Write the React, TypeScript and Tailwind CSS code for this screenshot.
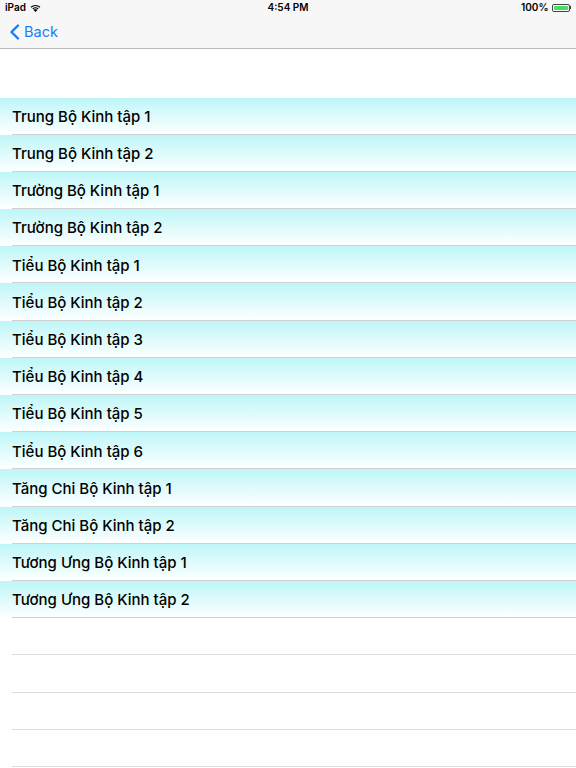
import React from "react";

const items = [
  "Trung Bộ Kinh tập 1",
  "Trung Bộ Kinh tập 2",
  "Trường Bộ Kinh tập 1",
  "Trường Bộ Kinh tập 2",
  "Tiểu Bộ Kinh tập 1",
  "Tiểu Bộ Kinh tập 2",
  "Tiểu Bộ Kinh tập 3",
  "Tiểu Bộ Kinh tập 4",
  "Tiểu Bộ Kinh tập 5",
  "Tiểu Bộ Kinh tập 6",
  "Tăng Chi Bộ Kinh tập 1",
  "Tăng Chi Bộ Kinh tập 2",
  "Tương Ưng Bộ Kinh tập 1",
  "Tương Ưng Bộ Kinh tập 2",
];

export default function App() {
  return (
    <div
      className="w-[576px] h-[768px] overflow-hidden bg-white"
      style={{ fontFamily: "Inter, 'Noto Sans', sans-serif" }}
    >
      <div className="bg-[#f7f7f7] border-b border-[#b8b8b8]">
        <div className="h-[15px] flex items-center justify-between px-[5px] text-[10px] font-semibold text-black relative">
          <div className="flex items-center gap-[4px]">
            <span>iPad</span>
            <svg width="11" height="8" viewBox="0 0 11 8">
              <path d="M5.5 8 L3.6 5.9 A2.8 2.8 0 0 1 7.4 5.9 Z" fill="#000" />
              <path d="M2.4 4.6 A4.6 4.6 0 0 1 8.6 4.6 L7.9 5.4 A3.5 3.5 0 0 0 3.1 5.4 Z" fill="#000" />
              <path d="M0.6 2.8 A7.2 7.2 0 0 1 10.4 2.8 L9.6 3.7 A6 6 0 0 0 1.4 3.7 Z" fill="#000" />
            </svg>
          </div>
          <span className="absolute left-1/2 -translate-x-1/2">4:54 PM</span>
          <div className="flex items-center gap-[3px]">
            <span>100%</span>
            <div className="flex items-center">
              <div className="w-[18px] h-[8px] border border-[#444] rounded-[2px] p-[1px]">
                <div className="w-full h-full bg-[#4cd964] rounded-[1px]" />
              </div>
              <div className="w-[1.5px] h-[3px] bg-[#444]" />
            </div>
          </div>
        </div>
        <div className="h-[33px] flex items-center pl-[9px] pt-[1px] text-[#157efb]">
          <svg width="11" height="16" viewBox="0 0 11 16" className="mr-[4px]">
            <path d="M9 1.5 L2.5 8 L9 14.5" stroke="#157efb" strokeWidth="2.4" fill="none" strokeLinecap="round" strokeLinejoin="round" />
          </svg>
          <span className="text-[14.5px]">Back</span>
        </div>
      </div>
      <div className="h-[48.5px]" />
      <div>
        {items.map((t) => (
          <div
            key={t}
            className="h-[37.2px] relative flex items-center pl-[12px] pt-[2px] bg-gradient-to-b from-[#bdf6f8] to-white"
          >
            <span className="text-[15px] font-medium text-black">{t}</span>
            <div className="absolute left-[12px] right-0 bottom-0 h-px bg-[#d2d2d2]" />
          </div>
        ))}
        {[0, 1, 2, 3].map((i) => (
          <div key={i} className="h-[37.2px] relative">
            <div className="absolute left-[12px] right-0 bottom-0 h-px bg-[#dcdcdc]" />
          </div>
        ))}
      </div>
    </div>
  );
}
